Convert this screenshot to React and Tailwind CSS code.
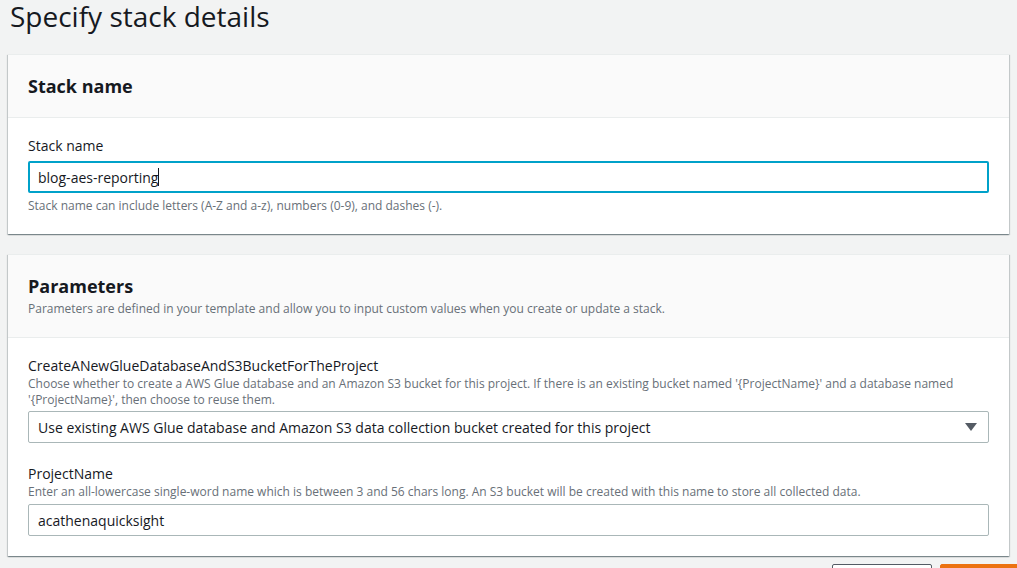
import React from 'react';

const font = { fontFamily: '"Open Sans", "Noto Sans", Arial, sans-serif' };

function Card({ title, description, children }) {
  return (
    <div className="bg-white border-t border-[#eaeded] shadow-[0_1px_1px_0_rgba(0,28,36,0.3),1px_1px_1px_0_rgba(0,28,36,0.15),-1px_1px_1px_0_rgba(0,28,36,0.15)]">
      <div className="bg-[#fafafa] border-b border-[#eaeded] px-5 py-5">
        <h2 className="text-[18px] leading-[22px] font-bold text-[#16191f]">{title}</h2>
        {description && (
          <p className="mt-1 text-[12px] leading-4 text-[#687078]">{description}</p>
        )}
      </div>
      <div className="px-5 pt-[18px] pb-5">{children}</div>
    </div>
  );
}

export default function App() {
  return (
    <div className="h-[568px] bg-[#f2f3f3] px-2 text-[#16191f] overflow-hidden" style={font}>
      <h1 className="pl-[2px] text-[28px] leading-[32px] text-[#16191f]">Specify stack details</h1>

      <div className="mt-[22px] flex flex-col gap-5">
        <Card title="Stack name">
          <label className="block text-[14px] leading-5">Stack name</label>
          <div className="mt-[5px] h-8 border-2 border-[#00a1c9] rounded-[2px] flex items-center px-2 text-[14px]">
            blog-aes-reporting<span className="inline-block w-px h-[18px] bg-[#16191f]"></span>
          </div>
          <p className="mt-[5px] text-[12px] leading-4 text-[#687078]">
            Stack name can include letters (A-Z and a-z), numbers (0-9), and dashes (-).
          </p>
        </Card>

        <Card
          title="Parameters"
          description="Parameters are defined in your template and allow you to input custom values when you create or update a stack."
        >
          <label className="block text-[14px] leading-5">CreateANewGlueDatabaseAndS3BucketForTheProject</label>
          <p className="text-[12px] leading-4 text-[#687078]">
            Choose whether to create a AWS Glue database and an Amazon S3 bucket for this project. If there is an existing bucket named '{'{'}ProjectName{'}'}' and a database named '{'{'}ProjectName{'}'}', then choose to reuse them.
          </p>
          <div className="mt-[3px] h-8 border border-[#aab7b8] rounded-[2px] flex items-center justify-between px-[9px] text-[14px]">
            <span>Use existing AWS Glue database and Amazon S3 data collection bucket created for this project</span>
            <svg width="12" height="8" viewBox="0 0 12 8" className="mr-[2px]">
              <path d="M0 0 H12 L6 8 Z" fill="#545b64" />
            </svg>
          </div>

          <label className="mt-[21px] block text-[14px] leading-5">ProjectName</label>
          <p className="text-[12px] leading-4 text-[#687078]">
            Enter an all-lowercase single-word name which is between 3 and 56 chars long. An S3 bucket will be created with this name to store all collected data.
          </p>
          <div className="mt-[4px] h-8 border border-[#aab7b8] rounded-[2px] flex items-center px-[9px] text-[14px]">
            acathenaquicksight
          </div>
        </Card>
      </div>

      <div className="mt-2 ml-[824px] flex gap-2">
        <div className="shrink-0 w-[100px] h-8 border border-[#545b64] rounded-[2px] bg-white"></div>
        <div className="shrink-0 w-[100px] h-8 border border-[#ec7211] rounded-[2px] bg-[#ec7211]"></div>
      </div>
    </div>
  );
}
